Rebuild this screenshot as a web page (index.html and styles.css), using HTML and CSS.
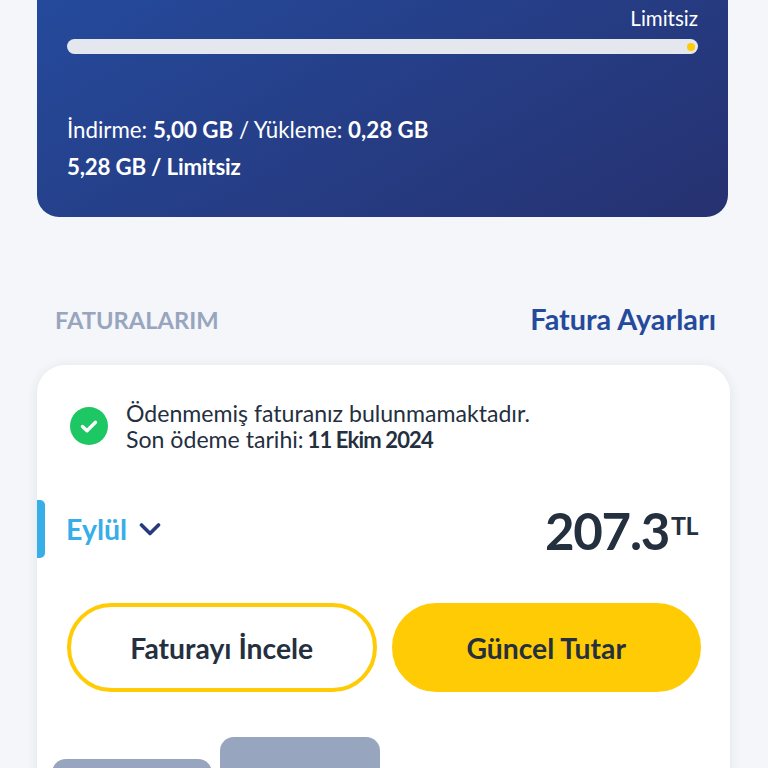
FILE: index.html
```html
<!DOCTYPE html>
<html lang="en">
<head>
  <meta charset="UTF-8">
  <meta name="viewport" content="width=device-width, initial-scale=1.0">
  <title>Faturalarım</title>
  <link rel="stylesheet" href="styles.css">
</head>
<body>
  <div class="page">
    <section class="usage-card">
      <div class="usage-limit">Limitsiz</div>
      <div class="usage-bar"><span class="usage-dot"></span></div>
      <p class="usage-line">İndirme: <b>5,00 GB</b> / Yükleme: <b>0,28 GB</b></p>
      <p class="usage-line usage-total"><b>5,28 GB / Limitsiz</b></p>
    </section>

    <div class="section-head">
      <h2 class="section-title">FATURALARIM</h2>
      <a class="section-link">Fatura Ayarları</a>
    </div>

    <section class="bill-card">
      <div class="bill-status">
        <svg class="status-icon" viewBox="0 0 38 38">
          <circle cx="19" cy="19" r="19" fill="#1dc764"/>
          <path d="M12.500 19.500l4.500 4.300 8.500-8.500" fill="none" stroke="#fff" stroke-width="3.400" stroke-linecap="round" stroke-linejoin="round"/>
        </svg>
        <div class="status-text">
          <div>Ödenmemiş faturanız bulunmamaktadır.</div>
          <div>Son ödeme tarihi: <b>11 Ekim 2024</b></div>
        </div>
      </div>

      <div class="bill-summary">
        <span class="month-marker"></span>
        <div class="month-select">
          Eylül
          <svg class="month-chevron" viewBox="0 0 22 14">
            <path d="M2.500 3l8.500 8.500L19.500 3" fill="none" stroke="#27397f" stroke-width="3.600" stroke-linecap="round" stroke-linejoin="round"/>
          </svg>
        </div>
        <div class="bill-amount">207.3<sup class="bill-currency">TL</sup></div>
      </div>

      <div class="bill-actions">
        <button class="btn btn-outline">Faturayı İncele</button>
        <button class="btn btn-solid">Güncel Tutar</button>
      </div>

      <div class="bill-chart">
        <div class="chart-bar chart-bar-low"></div>
        <div class="chart-bar chart-bar-high"></div>
      </div>
    </section>
  </div>
</body>
</html>
```

FILE: styles.css
```css
* {
  box-sizing: border-box;
}

html, body {
  margin: 0;
  height: 100%;
  overflow: hidden;
}

body {
  background: #f4f6f9;
  font-family: 'Lato', 'Liberation Sans', sans-serif;
  color: #25303f;
}

.page {
  height: 768px;
  overflow: hidden;
  padding: 0 37px 0 37px;
}

/* top usage card */
.usage-card {
  width: 691px;
  height: 217px;
  padding: 7px 30px 0;
  border-radius: 0 0 22px 22px;
  background: linear-gradient(150deg, #254a9c 0%, #263170 100%);
  color: #fff;
}

.usage-limit {
  text-align: right;
  font-size: 20.500px;
  line-height: 23px;
}

.usage-bar {
  display: flex;
  justify-content: flex-end;
  align-items: center;
  height: 15px;
  margin-top: 9px;
  margin-bottom: 64px;
  padding-right: 3px;
  border-radius: 8px;
  background: #e4e7ee;
}

.usage-dot {
  width: 8px;
  height: 8px;
  border-radius: 50%;
  background: #ffcb05;
}

.usage-line {
  margin: 0 0 13px;
  font-size: 22.300px;
  line-height: 24px;
}

.usage-line b {
  font-weight: 700;
}

.usage-total {
  letter-spacing: -0.200px;
}

/* section heading */
.section-head {
  display: flex;
  justify-content: space-between;
  align-items: center;
  height: 34px;
  margin-top: 86px;
  padding: 0 15px 0 18px;
}

.section-title {
  margin: 0;
  font-size: 23.700px;
  font-weight: 700;
  color: #98a5be;
}

.section-link {
  margin-bottom: 2px;
  font-size: 28.800px;
  font-weight: 700;
  color: #254a9c;
}

/* bill card */
.bill-card {
  width: 693px;
  height: 440px;
  margin-top: 28px;
  padding-top: 35px;
  border-radius: 28px;
  background: #fff;
  box-shadow: 0 2px 12px rgba(40, 60, 100, 0.1);
}

.bill-status {
  display: flex;
  align-items: center;
  gap: 18px;
  padding-left: 33px;
}

.status-icon {
  width: 38px;
  height: 38px;
  margin-top: -2px;
}

.status-text {
  font-size: 23.100px;
  line-height: 26px;
}

.status-text b {
  margin-left: -2px;
  font-size: 22px;
  letter-spacing: -0.850px;
}

.bill-summary {
  position: relative;
  display: flex;
  justify-content: space-between;
  align-items: center;
  height: 58px;
  margin-top: 47px;
  padding: 0 32px 0 29px;
}

.month-marker {
  position: absolute;
  left: 0;
  top: 0;
  width: 8px;
  height: 58px;
  border-radius: 0 5px 5px 0;
  background: #37aee8;
}

.month-select {
  display: flex;
  align-items: center;
  gap: 12px;
  font-size: 28.500px;
  font-weight: 700;
  color: #37aee8;
}

.month-chevron {
  width: 22px;
  height: 14px;
}

.bill-amount {
  margin-top: 4px;
  font-size: 51px;
  font-weight: 700;
  line-height: 58px;
  letter-spacing: -1.300px;
}

.bill-currency {
  margin-left: 2px;
  font-size: 25px;
  line-height: 0;
  letter-spacing: -0.500px;
  vertical-align: 15px;
}

.bill-actions {
  display: flex;
  gap: 15px;
  margin-top: 45px;
  padding: 0 29px 0 30px;
}

.btn {
  flex: 1;
  height: 89px;
  border: 4px solid #ffcb05;
  border-radius: 45px;
  font-family: inherit;
  font-size: 28.300px;
  font-weight: 700;
  color: #25303f;
}

.btn-outline {
  background: #fff;
}

.btn-solid {
  background: #ffcb05;
}

/* bar chart, cut off by the window */
.bill-chart {
  display: flex;
  align-items: flex-end;
  gap: 8px;
  height: 60px;
  margin-top: 45px;
  padding-left: 15px;
}

.chart-bar {
  width: 160px;
  border-radius: 14px 14px 0 0;
  background: #98a5be;
}

.chart-bar-low {
  height: 38px;
}

.chart-bar-high {
  height: 60px;
}
```
